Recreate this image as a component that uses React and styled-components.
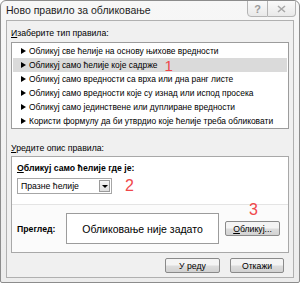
import React from 'react';
import styled, { createGlobalStyle } from 'styled-components';

const GlobalStyle = createGlobalStyle`
  html, body {
    margin: 0;
    padding: 0;
    background: #fff;
  }
  body {
    font-family: "Liberation Sans", Arial, sans-serif;
    font-size: 8.7px;
    color: #000;
  }
`;

const Window = styled.div`
  width: 300px;
  height: 283px;
  box-sizing: border-box;
  border: 1px solid #8c8c8c;
  border-radius: 6px 6px 2px 2px;
  background: linear-gradient(#f7f7f7, #ececec);
  display: flex;
  flex-direction: column;
  overflow: hidden;
`;

const TitleBar = styled.div`
  height: 19px;
  flex: none;
  display: flex;
  align-items: flex-start;
  justify-content: space-between;
  padding-left: 5px;
`;

const Title = styled.span`
  font-size: 10.5px;
  line-height: 19px;
  color: #1e1e1e;
`;

const TitleButtons = styled.div`
  display: flex;
  margin-right: 3px;
  margin-top: -1px;
`;

const CaptionButton = styled.div`
  width: ${(p) => p.$w}px;
  height: 17px;
  box-sizing: border-box;
  border: 1px solid #b4b4b4;
  border-left-width: ${(p) => (p.$first ? 1 : 0)}px;
  border-radius: ${(p) => (p.$first ? '0 0 0 4px' : '0 0 4px 0')};
  background: linear-gradient(#fafafa, #e9e9e9);
  display: flex;
  align-items: center;
  justify-content: center;
  color: #9a9a9a;
  font-size: 11px;
  font-weight: bold;
`;

const Client = styled.div`
  flex: 1;
  margin: 0 5px 4px 5px;
  border: 1px solid #b0b0b0;
  background: #f0f0f0;
  padding: 6px 4px 0 4px;
  display: flex;
  flex-direction: column;
`;

const Label = styled.div`
  line-height: 12px;
  margin-bottom: ${(p) => p.$gap}px;
`;

const Key = styled.span`
  text-decoration: underline;
`;

const ListBox = styled.div`
  height: 87px;
  box-sizing: border-box;
  border: 1px solid #9c9c9c;
  background: #fff;
  padding: 1px 1px 0 1px;
  margin-bottom: 13px;
`;

const Row = styled.div`
  height: 14px;
  display: flex;
  align-items: center;
  white-space: nowrap;
  font-size: 8.45px;
  padding-left: 8px;
  background: ${(p) => (p.$selected ? '#dadada' : 'transparent')};
`;

const Arrow = styled.span`
  width: 0;
  height: 0;
  border-left: 5px solid #000;
  border-top: 3px solid transparent;
  border-bottom: 3px solid transparent;
  margin-right: 3px;
`;

const Mark = styled.span`
  color: #f0474a;
  font-family: "Liberation Sans", Arial, sans-serif;
  font-size: ${(p) => p.$size}px;
  line-height: 1;
  margin-left: ${(p) => p.$left || 0}px;
`;

const Panel = styled.div`
  height: 97px;
  box-sizing: border-box;
  border: 1px solid #a8a8a8;
  display: flex;
  flex-direction: column;
  margin-bottom: 5px;
`;

const PanelTop = styled.div`
  background: #fff;
  padding: 5px 5px 0 5px;
  height: 48px;
  box-sizing: border-box;
  border-bottom: 1px solid #e4e4e4;
`;

const BoldLabel = styled.div`
  font-weight: bold;
  line-height: 12px;
  white-space: nowrap;
  margin-bottom: ${(p) => p.$gap || 0}px;
`;

const SelectRow = styled.div`
  display: flex;
  align-items: center;
`;

const Select = styled.div`
  width: 95px;
  height: 16px;
  box-sizing: border-box;
  border: 1px solid #a6a6a6;
  background: #fff;
  display: flex;
  align-items: center;
  justify-content: space-between;
  padding: 0 1px 0 3px;
`;

const DropButton = styled.div`
  width: 11px;
  height: 12px;
  box-sizing: border-box;
  border: 1px solid #9a9a9a;
  background: linear-gradient(#f6f6f6, #dedede);
  display: flex;
  align-items: center;
  justify-content: center;
`;

const DropArrow = styled.span`
  width: 0;
  height: 0;
  border-top: 3px solid #000;
  border-left: 3px solid transparent;
  border-right: 3px solid transparent;
`;

const PanelBottom = styled.div`
  flex: 1;
  background: #fbfbfb;
  display: flex;
  align-items: center;
  padding: 0 8px 0 5px;
`;

const PreviewLabel = styled.div`
  font-weight: bold;
  width: 49px;
`;

const PreviewBox = styled.div`
  width: 153px;
  height: 31px;
  box-sizing: border-box;
  border: 1px solid #9c9c9c;
  background: #fff;
  display: flex;
  align-items: center;
  justify-content: center;
  font-size: 10.5px;
  white-space: nowrap;
  margin-right: 6px;
`;

const ButtonWrap = styled.div`
  position: relative;
`;

const MarkOver = styled(Mark)`
  position: absolute;
  left: 24px;
  top: -19px;
`;

const Button = styled.div`
  width: ${(p) => p.$w}px;
  height: 15px;
  box-sizing: border-box;
  border: 1px solid #8a8a8a;
  border-radius: 2px;
  background: linear-gradient(#f4f4f4 45%, #dcdcdc 55%, #d2d2d2);
  display: flex;
  align-items: center;
  justify-content: center;
  white-space: nowrap;
`;

const Footer = styled.div`
  display: flex;
  justify-content: flex-end;
  gap: 10px;
  padding-right: 5px;
`;

const rules = [
  'Обликуј све ћелије на основу њихове вредности',
  'Обликуј само ћелије које садрже',
  'Обликуј само вредности са врха или дна ранг листе',
  'Обликуј само вредности које су изнад или испод просека',
  'Обликуј само јединствене или дуплиране вредности',
  'Користи формулу да би утврдио које ћелије треба обликовати',
];

export default function App() {
  return (
    <>
      <GlobalStyle />
      <Window>
        <TitleBar>
          <Title>Ново правило за обликовање</Title>
          <TitleButtons>
            <CaptionButton $w={21} $first>?</CaptionButton>
            <CaptionButton $w={28}>
              <svg width="9" height="8" viewBox="0 0 9 8">
                <path d="M1 1 L8 7 M8 1 L1 7" stroke="#a8a8a8" strokeWidth="1.6" />
              </svg>
            </CaptionButton>
          </TitleButtons>
        </TitleBar>
        <Client>
          <Label $gap={3}>
            <Key>И</Key>заберите тип правила:
          </Label>
          <ListBox>
            {rules.map((r, i) => (
              <Row key={i} $selected={i === 1}>
                <Arrow />
                {r}
                {i === 1 && <Mark $size={15} $left={7}>1</Mark>}
              </Row>
            ))}
          </ListBox>
          <Label $gap={2}>
            <Key>У</Key>редите опис правила:
          </Label>
          <Panel>
            <PanelTop>
              <BoldLabel $gap={4}>
                <Key>О</Key>бликуј само ћелије где је:
              </BoldLabel>
              <SelectRow>
                <Select>
                  Празне ћелије
                  <DropButton>
                    <DropArrow />
                  </DropButton>
                </Select>
                <Mark $size={16} $left={13}>2</Mark>
              </SelectRow>
            </PanelTop>
            <PanelBottom>
              <PreviewLabel>Преглед:</PreviewLabel>
              <PreviewBox>Обликовање није задато</PreviewBox>
              <ButtonWrap>
                <MarkOver $size={16}>3</MarkOver>
                <Button $w={55}>
                  <span>
                    <Key>О</Key>бликуј...
                  </span>
                </Button>
              </ButtonWrap>
            </PanelBottom>
          </Panel>
          <Footer>
            <Button $w={55}>У реду</Button>
            <Button $w={54}>Откажи</Button>
          </Footer>
        </Client>
      </Window>
    </>
  );
}
